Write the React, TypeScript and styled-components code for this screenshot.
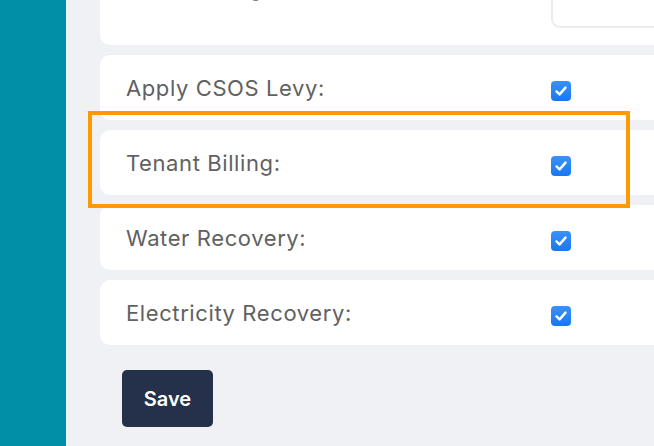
import React from 'react';
import styled, { createGlobalStyle } from 'styled-components';

const GlobalStyle = createGlobalStyle`
  html, body {margin: 0; padding: 0;}
  body {font-family: Inter, "Liberation Sans", sans-serif; background: #f0f1f5;}
  * {box-sizing: border-box;}
`

const Page = styled.div`
  display: flex;
  width: 654px;
  height: 446px;
  overflow: hidden;
  background: #f0f1f5;
`
const Sidebar = styled.aside`
  flex: 0 0 66px;
  background: #018fa8;
`
const Main = styled.main`
  flex: 1;
  padding-left: 34px;
  /* page is scrolled down a bit */
  margin-top: -60px;
`
const List = styled.div`
  display: flex;
  flex-direction: column;
  gap: 10px;
  width: 640px;
`
const Card = styled.div`
  display: grid;
  grid-template-columns: 425px 1fr;
  align-items: center;
  min-height: 65px;
  padding: 17px 0 17px 26px;
  background: #fff;
  border-radius: 10px;
`
const Label = styled.div<{ $top?: number }>`
  font-size: 22px;
  line-height: 30px;
  letter-spacing: 0.6px;
  color: #616161;
  ${p => p.$top !== undefined && `align-self: start; margin-top: ${p.$top}px;`}
`
const TextBox = styled.div`
  height: 71px;
  border: 2px solid #ebebee;
  border-right: none;
  border-radius: 9px 0 0 9px;
`
const Check = styled.span<{ checked?: boolean }>`
  display: flex;
  align-items: center;
  justify-content: center;
  width: 20px;
  height: 20px;
  margin-top: 6px;
  border-radius: 4px;
  background: ${p => p.checked ? 'linear-gradient(#3a92f8, #1877f2)' : '#fff'};
  > svg {width: 14px; height: 14px;}
`
const Highlight = styled.div`
  position: relative;
  > .mark {
    position: absolute;
    top: -19px;
    left: -12px;
    width: 542px;
    height: 97px;
    border: 4px solid #ff9900;
    pointer-events: none;
  }
`
const SaveButton = styled.button`
  margin: 25px 0 0 22px;
  width: 91px;
  height: 57px;
  border: none;
  border-radius: 5px;
  background: #25314a;
  color: #fff;
  font-family: Inter, "Liberation Sans", sans-serif;
  font-size: 20px;
  font-weight: 600;
`

function Tick() {
  return (
    <svg viewBox="0 0 14 14" fill="none">
      <path d="M2.5 7.4 L5.6 10.4 L11.5 3.6" stroke="#fff" strokeWidth="2.4" strokeLinecap="round" strokeLinejoin="round" />
    </svg>
  )
}

function Row({ label }: { label: string }) {
  return (
    <Card>
      <Label>{label}</Label>
      <Check checked><Tick /></Check>
    </Card>
  )
}

function App() {
  return (
    <Page>
      <GlobalStyle />
      <Sidebar />
      <Main>
        <List>
          <Card>
            <Label $top={16}>Meter Billing:</Label>
            <TextBox />
          </Card>
          <Row label="Apply CSOS Levy:" />
          <Highlight>
            <Row label="Tenant Billing:" />
            <div className="mark" />
          </Highlight>
          <Row label="Water Recovery:" />
          <Row label="Electricity Recovery:" />
        </List>
        <SaveButton>Save</SaveButton>
      </Main>
    </Page>
  )
}
export default App
